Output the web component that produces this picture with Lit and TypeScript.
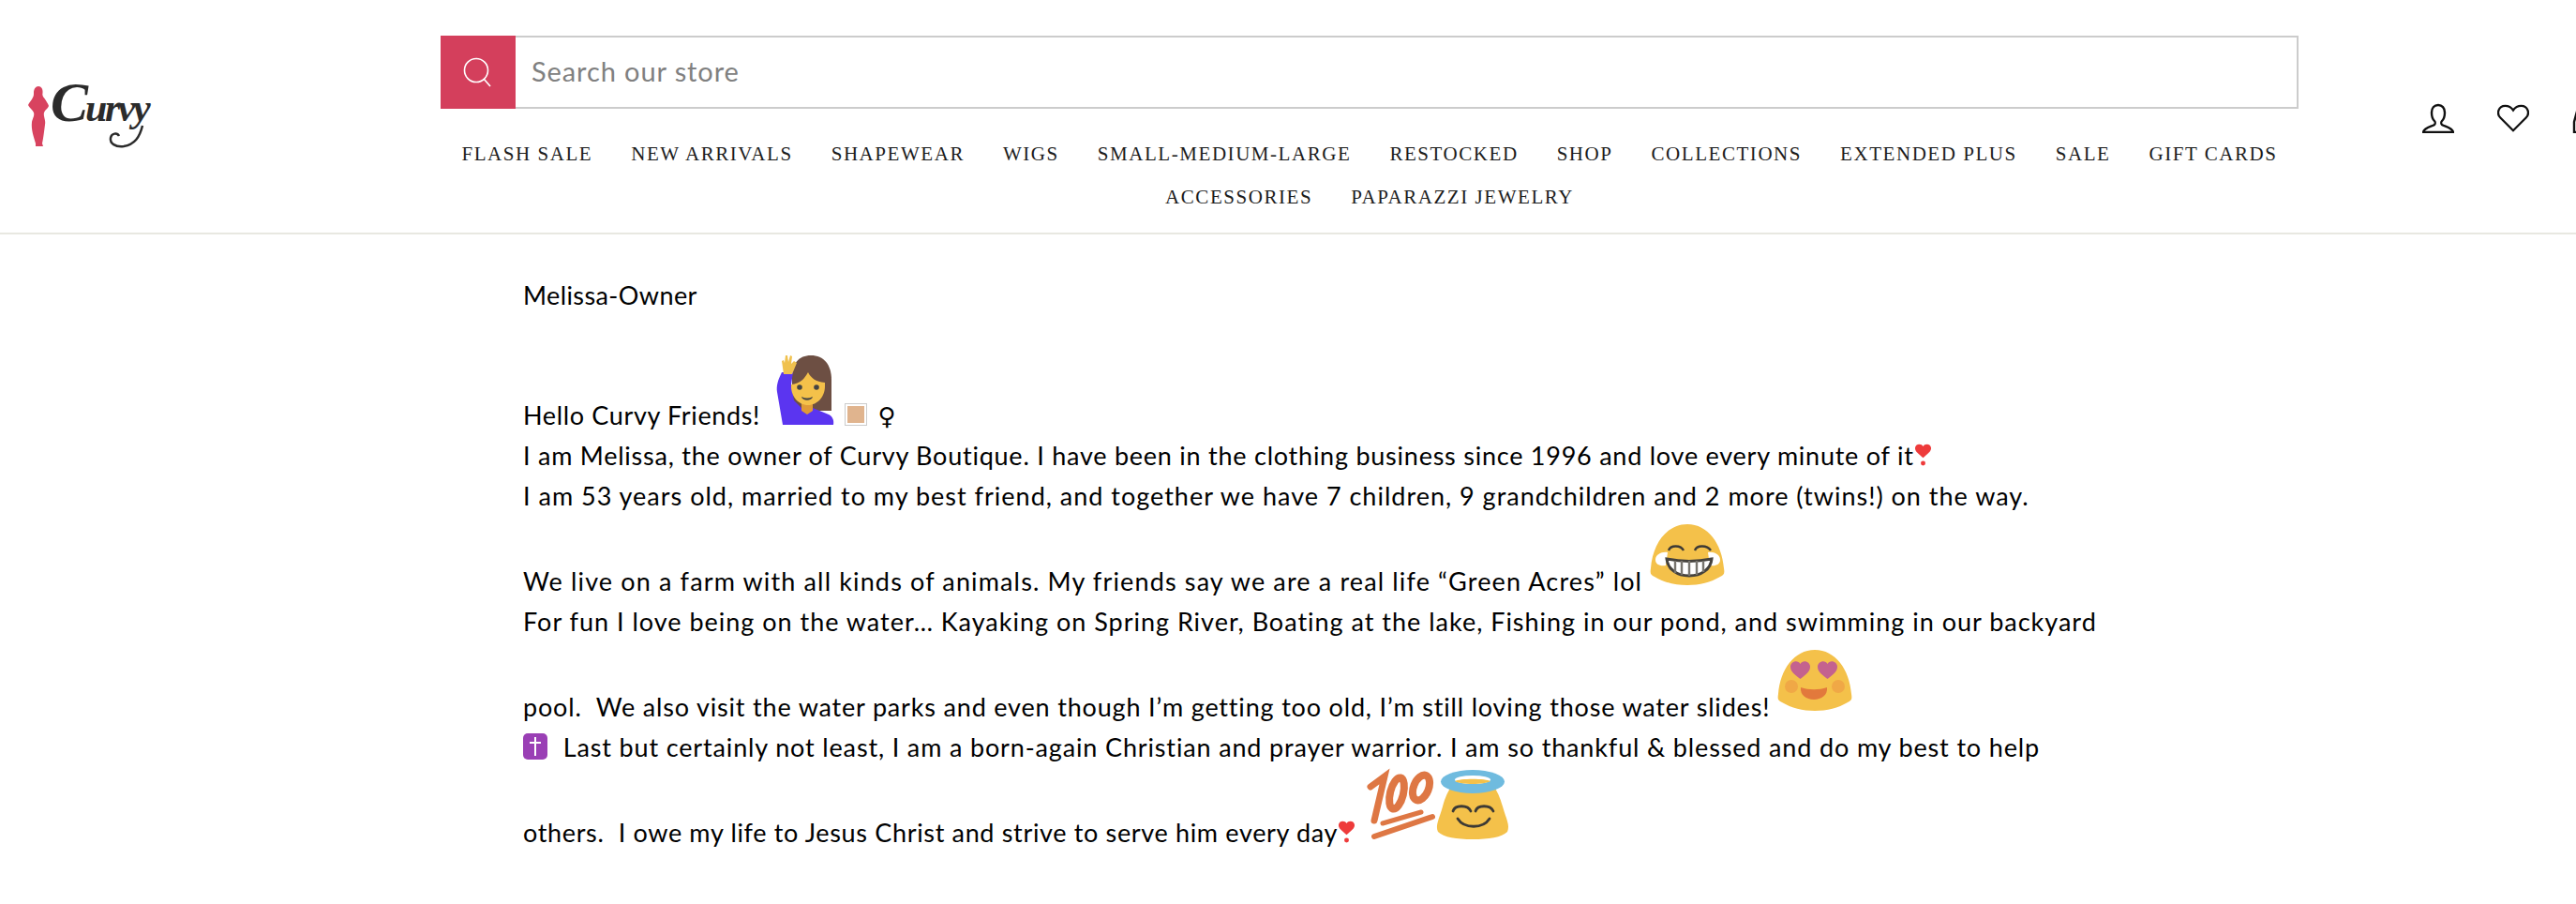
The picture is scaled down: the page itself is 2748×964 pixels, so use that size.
import { LitElement, html, css, svg } from "lit";
import { customElement } from "lit/decorators.js";
import { styleMap } from "lit/directives/style-map.js";

const navItems = [
  "Flash Sale",
  "New Arrivals",
  "Shapewear",
  "Wigs",
  "Small-Medium-Large",
  "Restocked",
  "Shop",
  "Collections",
  "Extended Plus",
  "Sale",
  "Gift Cards",
  "Accessories",
  "Paparazzi Jewelry",
];

const yellow = "#f4c14a";

// google "blob" style face shape, shared by the big emoji
const blob = svg`<path d="M40 9C18 9 3 30 1 56c-1 6 0 7 4 9 10 6 22 9 35 9s25-3 35-9c4-2 5-3 4-9C77 30 62 9 40 9z" fill="${yellow}" />`;

const womanEmoji = html`<svg class="emoji" viewBox="0 0 80 80">
  <path d="M46 6c14 0 22 10 22 26v33H26V28C26 15 33 6 46 6z" fill="#6d4f43" />
  <path d="M15 24C11 32 9 38 10 45l6 35h54c1-5-1-9-5-11l-17-7H36l-8-8-3-17 2-13z" fill="#5b35f0" />
  <path d="M17 26l-2-14 2-1 1 3 1-8h2l1 7 2-7 2 1-1 8 3-3 3 2-5 12z" fill="#f0c14e" />
  <path d="M36 55h12v10l-6 4-6-4z" fill="#e09a37" />
  <path d="M25 37c10-1 14-6 18-13 3 6 8 10 18 11v4c0 11-8 20-18 20s-18-9-18-20z" fill="${yellow}" />
  <circle cx="34" cy="40" r="2.800" fill="#444" />
  <circle cx="52" cy="40" r="2.800" fill="#444" />
  <path d="M36 50c4 2 8 2 12 0-1 5-11 5-12 0z" fill="#444" />
</svg>`;

const grinEmoji = html`<svg class="emoji" viewBox="0 0 80 80">
  ${blob}
  <path d="M20 37c2-6 13-6 16 0M48 37c2-6 13-6 17 0" fill="none" stroke="#3d3a35" stroke-width="2.400" />
  <path d="M6 47c0-6 7-9 13-8l-2 14c-6 1-11-1-11-6zM75 47c0-6-7-9-13-8l2 14c6 1 11-1 11-6z" fill="#fff" />
  <path d="M18 46c15 3 33 3 48 0-1 11-11 18-24 18S19 57 18 46z" fill="#fff" stroke="#45423d" stroke-width="3" />
  <path d="M27 48v13M34 48v15M42 48v16M50 48v15M57 48v12" stroke="#77746e" stroke-width="2.400" />
</svg>`;

const heartEyesEmoji = html`<svg class="emoji" viewBox="0 0 80 80">
  ${blob}
  <path d="M24.500 40C18 35 14 32 14 27c0-6 8-8 10.500-3C27 19 35 21 35 27c0 5-4 8-10.500 13zM53.500 40C47 35 43 32 43 27c0-6 8-8 10.500-3C56 19 64 21 64 27c0 5-4 8-10.500 13z" fill="#c4628f" />
  <circle cx="15" cy="48" r="7" fill="#f0a846" />
  <circle cx="65" cy="48" r="7" fill="#f0a846" />
  <path d="M25 49c9 3 19 3 28 0 1 8-6 13-14 13s-15-5-14-13z" fill="#e2793c" />
</svg>`;

const hundredEmoji = html`<svg class="emoji hundred" viewBox="0 0 80 80">
  <g fill="none" stroke="#de7744" stroke-linecap="round">
    <path d="M11 21l15-11-11 47" stroke-width="7" />
    <ellipse cx="39" cy="28" rx="7" ry="17" transform="rotate(14 39 28)" stroke-width="8" />
    <ellipse cx="65" cy="22" rx="8" ry="14" transform="rotate(22 65 22)" stroke-width="8" />
    <path d="M24 60l41-12" stroke-width="5" />
    <path d="M15 74l62-21" stroke-width="6" />
  </g>
</svg>`;

const angelEmoji = html`<svg class="emoji" viewBox="0 0 80 80">
  <path d="M40 8C22 8 13 24 8 42 4 56 0 62 3 69c6 6 20 8 37 8s31-2 37-8c3-7-1-13-5-27C67 24 58 8 40 8z" fill="${yellow}" />
  <ellipse cx="40" cy="15.500" rx="34" ry="12.500" fill="#6fbbdf" />
  <ellipse cx="40" cy="13.500" rx="19" ry="4.500" fill="#fff" />
  <path d="M21 15c5-3 33-3 38 0-6 4-32 4-38 0z" fill="${yellow}" />
  <path d="M19 47c2-7 16-7 19 0M43 47c2-7 16-7 19 0M24 55c7 11 27 11 34 0" fill="none" stroke="#3d3a35" stroke-width="2.800" stroke-linecap="round" />
</svg>`;

const tinyHeart = html`<svg class="tiny-heart" viewBox="0 0 20 25">
  <path d="M10 16C5 11 1 9 1 5c0-5 7-6 9-2 2-4 9-3 9 2 0 4-4 6-9 11z" fill="#ee3b3b" />
  <circle cx="10" cy="22" r="2.600" fill="#ee3b3b" />
</svg>`;

const skinTile = html`<svg class="skin-tile" viewBox="0 0 24 24">
  <rect x="0.500" y="0.500" width="23" height="23" fill="#fff" stroke="#ccc" />
  <rect x="3" y="3" width="18" height="18" fill="#e0b48e" />
</svg>`;

const crossTile = html`<svg class="cross-tile" viewBox="0 0 26 28">
  <rect width="26" height="28" rx="5" fill="#9a3fb5" />
  <path d="M13 4v20M7 10h12" stroke="#fff" stroke-width="2" />
</svg>`;

const lines = [
  {
    tracking: 0.65,
    body: html`Hello Curvy Friends! ${womanEmoji}${skinTile}<span class="female">♀</span>`,
  },
  {
    tracking: 0.76,
    body: html`I am Melissa, the owner of Curvy Boutique. I have been in the clothing business since 1996 and love every minute of it${tinyHeart}`,
  },
  {
    tracking: 1,
    body: html`I am 53 years old, married to my best friend, and together we have 7 children, 9 grandchildren and 2 more (twins!) on the way.`,
  },
  {
    tracking: 1.14,
    body: html`We live on a farm with all kinds of animals. My friends say we are a real life “Green Acres” lol ${grinEmoji}`,
  },
  {
    tracking: 0.99,
    body: html`For fun I love being on the water… Kayaking on Spring River, Boating at the lake, Fishing in our pond, and swimming in our backyard`,
  },
  {
    tracking: 0.82,
    body: html`pool.&nbsp; We also visit the water parks and even though I’m getting too old, I’m still loving those water slides! ${heartEyesEmoji}`,
  },
  {
    tracking: 0.85,
    body: html`${crossTile} Last but certainly not least, I am a born-again Christian and prayer warrior. I am so thankful &amp; blessed and do my best to help`,
  },
  {
    tracking: 0.66,
    body: html`others.&nbsp; I owe my life to Jesus Christ and strive to serve him every day${tinyHeart}${hundredEmoji}${angelEmoji}`,
  },
];

@customElement("app-root")
export class AppRoot extends LitElement {
  static styles = css`
    :host {
      display: block;
      width: 100%;
      height: 964px;
      overflow: hidden;
      background: #fff;
      color: #000;
      font-family: "Lato", "Liberation Sans", sans-serif;
    }

    .header {
      display: flex;
      height: 248px;
      border-bottom: 2px solid #e8e8e1;
    }

    .logo {
      flex: 0 0 470px;
      box-sizing: border-box;
      padding: 92px 0 0 30px;
    }

    .logo-mark {
      display: flex;
      position: relative;
      align-items: flex-start;
    }

    .figure {
      width: 22px;
      height: 64px;
      flex: none;
    }

    .logo-name {
      font-family: "Liberation Serif", serif;
      font-weight: 700;
      font-style: italic;
      font-size: 42px;
      line-height: 48px;
      letter-spacing: -2.500px;
      color: #2b2b2b;
      margin: -7px 0 0 2px;
    }

    .logo-name b {
      font-size: 60px;
      letter-spacing: -3px;
    }

    .swash {
      position: absolute;
      left: 85px;
      top: 40px;
      width: 44px;
      height: 28px;
    }

    .center {
      flex: 0 0 1982px;
      padding-top: 38px;
    }

    .search {
      display: flex;
      height: 78px;
      box-sizing: border-box;
      border: 2px solid #ccc;
      border-left: 0;
    }

    .search-button {
      width: 80px;
      margin: -2px 0;
      background: #d43f5c;
      display: flex;
      align-items: center;
      justify-content: center;
    }

    .search-button svg {
      width: 32px;
      height: 32px;
    }

    .placeholder {
      padding-left: 17px;
      font-size: 29px;
      line-height: 72px;
      letter-spacing: 0.900px;
      color: #808080;
    }

    .nav {
      display: flex;
      flex-wrap: wrap;
      justify-content: center;
      padding-top: 25px;
    }

    .nav a {
      padding: 0 20.500px;
      font-family: "Liberation Serif", serif;
      font-size: 21px;
      line-height: 46px;
      letter-spacing: 1.550px;
      text-transform: uppercase;
      color: #1c1c1c;
    }

    .icons {
      display: flex;
      flex: none;
      gap: 46px;
      padding: 110px 0 0 132px;
    }

    .icons svg {
      width: 34px;
      height: 32px;
      flex: none;
    }

    .content {
      padding: 43px 0 0 558px;
      font-size: 27px;
      line-height: 43px;
      white-space: nowrap;
    }

    .owner {
      margin: 0 0 37px;
      letter-spacing: 0.400px;
    }

    .emoji {
      width: 80px;
      height: 80px;
      vertical-align: baseline;
    }

    .hundred {
      margin-left: 5px;
    }

    .tiny-heart {
      width: 19px;
      height: 24px;
      vertical-align: -1px;
    }

    .skin-tile {
      width: 24px;
      height: 24px;
      margin: 0 12px 0 2px;
      vertical-align: -1px;
    }

    .female {
      font-family: "DejaVu Sans", sans-serif;
      font-size: 26px;
      line-height: 1;
    }

    .cross-tile {
      width: 26px;
      height: 28px;
      margin-right: 9px;
      vertical-align: -3px;
    }
  `;

  render() {
    return html`
      <div class="header">
        <div class="logo">
          <div class="logo-mark">
            <svg class="figure" viewBox="0 0 22 64">
              <path
                d="M11 0c3 0 5 3 4.500 7-.5 2 0 4 2 6 2 3 4 6 4.500 8-1 3-4 4-5 7-1 4 2 8 1 13-1 8-2 15-3 20l1 3H8l0-3C6 54 3 46 4 38c1-4 3-7 2-10-1-3-5-5-6-8 1-3 4-5 5-8 1-2 1-3 1-5 0-4 2-7 5-7z"
                fill="#d8435f"
              />
            </svg>
            <span class="logo-name"><b>C</b>urvy</span>
            <svg class="swash" viewBox="0 0 44 28">
              <path
                d="M37 2c-3 12-8 20-20 22-9 1-15-3-14-9 1-5 7-6 9-2"
                fill="none"
                stroke="#2b2b2b"
                stroke-width="2.500"
              />
            </svg>
          </div>
        </div>
        <div class="center">
          <div class="search">
            <div class="search-button">
              <svg viewBox="0 0 32 32" fill="none" stroke="#fff" stroke-width="1.600">
                <circle cx="14" cy="14" r="12.500" />
                <path d="M22 23l7 8" />
              </svg>
            </div>
            <div class="placeholder">Search our store</div>
          </div>
          <nav class="nav">${navItems.map((item) => html`<a>${item}</a>`)}</nav>
        </div>
        <div class="icons">
          <svg viewBox="0 0 34 32" fill="none" stroke="#111" stroke-width="2.400">
            <path d="M17 2c-4 0-7 3-7 8 0 4 1 7 3 9 1 1 1 3 0 4-3 2-11 3-12 8h32c-1-5-9-6-12-8-1-1-1-3 0-4 2-2 3-5 3-9 0-5-3-8-7-8z" />
          </svg>
          <svg viewBox="0 0 36 32" fill="none" stroke="#111" stroke-width="2.400">
            <path d="M18 30L3.500 15.500C-1 11 1 2 9 2c4 0 7 2 9 5 2-3 5-5 9-5 8 0 10 9 5.500 13.500z" />
          </svg>
          <svg viewBox="0 0 34 32" fill="none" stroke="#111" stroke-width="2.400">
            <path d="M2 20v11h30l-3-22H5z" />
          </svg>
        </div>
      </div>
      <div class="content">
        <p class="owner">Melissa-Owner</p>
        ${lines.map(
          (line) =>
            html`<div style=${styleMap({ letterSpacing: `${line.tracking}px` })}>${line.body}</div>`,
        )}
      </div>
    `;
  }
}
